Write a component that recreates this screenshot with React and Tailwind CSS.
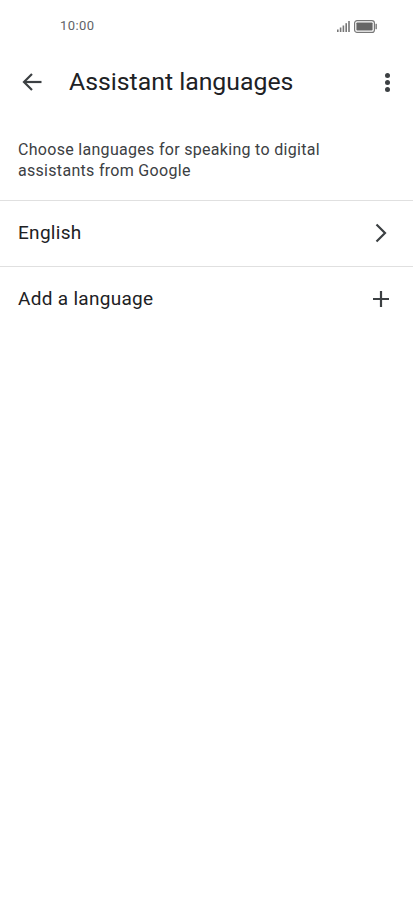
const font = { fontFamily: 'Roboto, sans-serif' };

function StatusBar() {
  return (
    <div className="h-[52px] flex items-center justify-between pl-[60px] pr-[36px]">
      <span className="text-[13px] text-[#5f6368] tracking-[0.45px]">10:00</span>
      <div className="flex items-center gap-[4px]">
        <svg width="13" height="11" viewBox="0 0 13 11" fill="#777">
          <rect x="0" y="8.5" width="1.6" height="2.5" />
          <rect x="2.8" y="6.5" width="1.6" height="4.5" />
          <rect x="5.6" y="4.5" width="1.6" height="6.5" />
          <rect x="8.4" y="2.2" width="1.6" height="8.8" />
          <rect x="11.2" y="0" width="1.6" height="11" />
        </svg>
        <svg width="23" height="13" viewBox="0 0 23 13">
          <rect x="0.6" y="0.6" width="19.8" height="11.8" rx="2.5" fill="none" stroke="#777" strokeWidth="1.2" />
          <rect x="2.4" y="2.4" width="16.2" height="8.2" rx="0.8" fill="#666" />
          <rect x="21.4" y="3.8" width="1.6" height="5.4" fill="#888" />
        </svg>
      </div>
    </div>
  );
}

function Header() {
  return (
    <div className="h-[60px] flex items-center">
      <div className="w-[69px] pl-[20px] shrink-0">
        <svg width="24" height="24" viewBox="0 0 24 24" fill="none" stroke="#3c4043" strokeWidth="2.2">
          <path d="M21.5 12H5" />
          <path d="M12 4 4 12l8 8" />
        </svg>
      </div>
      <h1 className="flex-1 text-[24.8px] leading-[32px] text-[#202124]">Assistant languages</h1>
      <div className="flex flex-col gap-[2px] pr-[23px]">
        <span className="w-[5px] h-[5px] rounded-full bg-[#3c4043]" />
        <span className="w-[5px] h-[5px] rounded-full bg-[#3c4043]" />
        <span className="w-[5px] h-[5px] rounded-full bg-[#3c4043]" />
      </div>
    </div>
  );
}

function Row({ label, children }) {
  return (
    <div className="h-[66px] flex items-center justify-between pl-[18px] pr-[24px] border-t border-[#e0e0e0]">
      <span className="text-[19px] text-[#202124] tracking-[0.3px]">{label}</span>
      <div className="mb-[2px]">{children}</div>
    </div>
  );
}

export default function App() {
  return (
    <div className="w-[413px] h-[924px] bg-white overflow-hidden" style={font}>
      <StatusBar />
      <Header />
      <p className="pt-[27px] pb-[19px] px-[18px] text-[16px] leading-[21px] text-[#3c4043] tracking-[0.3px]">
        Choose languages for speaking to digital assistants from Google
      </p>
      <Row label="English">
        <svg className="block" width="16" height="20" viewBox="0 0 16 20" fill="none" stroke="#3c4043" strokeWidth="2.2">
          <path d="M3.5 1.5 12 10l-8.5 8.5" />
        </svg>
      </Row>
      <Row label="Add a language">
        <svg className="block" width="16" height="16" viewBox="0 0 16 16" fill="none" stroke="#3c4043" strokeWidth="2.2">
          <path d="M0 8h16M8 0v16" />
        </svg>
      </Row>
    </div>
  );
}
